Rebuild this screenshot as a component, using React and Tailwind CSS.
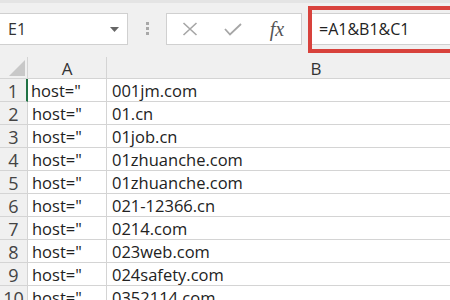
import React from "react";

const rows = [
  "001jm.com",
  "01.cn",
  "01job.cn",
  "01zhuanche.com",
  "01zhuanche.com",
  "021-12366.cn",
  "0214.com",
  "023web.com",
  "024safety.com",
  "0352114.com",
];

export default function App() {
  return (
    <div
      className="w-[450px] h-[300px] overflow-hidden bg-white text-[#222]"
      style={{ fontFamily: '"Open Sans", "Noto Sans CJK SC", sans-serif' }}
    >
      {/* Toolbar */}
      <div className="h-[57px] bg-[#f0f0f0] border-t-[3px] border-[#e4e4e4] flex items-start">
        <div className="mt-[10px] h-[32px] w-[128px] shrink-0 bg-white border border-[#d0d0d0] border-l-0 flex items-center justify-between pl-[8px] pr-[8px]">
          <span className="text-[16px] text-[#333]">E1</span>
          <svg width="9" height="5" viewBox="0 0 9 5">
            <path d="M0 0 H9 L4.5 5 Z" fill="#666" />
          </svg>
        </div>
        <div className="w-[38px] shrink-0 h-[49px] flex flex-col items-center justify-center gap-[2px] pt-[2px]">
          <div className="w-[3px] h-[3px] bg-[#a8a8a8]" />
          <div className="w-[3px] h-[3px] bg-[#a8a8a8]" />
          <div className="w-[3px] h-[3px] bg-[#a8a8a8]" />
        </div>
        <div className="mt-[10px] h-[32px] w-[136px] shrink-0 bg-white border border-[#d0d0d0] flex items-center">
          <div className="w-[44px] flex justify-center pl-[2px]">
            <svg width="16" height="14" viewBox="0 0 16 14">
              <path d="M1.5 1 L14.5 13 M14.5 1 L1.5 13" stroke="#a6a6a6" strokeWidth="1.6" fill="none" />
            </svg>
          </div>
          <div className="w-[44px] flex justify-center">
            <svg width="18" height="13" viewBox="0 0 18 13">
              <path d="M1 6 L6 11.5 L17 1" stroke="#a6a6a6" strokeWidth="1.8" fill="none" />
            </svg>
          </div>
          <div className="w-[44px] flex justify-center">
            <span
              className="text-[20px] italic text-[#555] leading-none"
              style={{ fontFamily: '"Liberation Serif", serif' }}
            >
              fx
            </span>
          </div>
        </div>
        <div className="ml-[6px] mt-[3px] h-[47px] flex-1 border-4 border-r-0 border-[#d8423c] pt-[3px]">
          <div className="h-[32px] bg-white border-y border-[#d0d0d0] flex items-center pl-[7px]">
            <span className="text-[16px] text-[#222]">=A1&amp;B1&amp;C1</span>
          </div>
        </div>
      </div>

      {/* Column headers */}
      <div className="h-[22px] bg-[#f0f0f0] flex border-b border-[#d4d4d4]">
        <div className="w-[28px] shrink-0 border-r border-[#d4d4d4] relative">
          <svg className="absolute right-[2px] bottom-[2px]" width="16" height="16" viewBox="0 0 16 16">
            <path d="M16 0 V16 H0 Z" fill="#c8c8c8" />
          </svg>
        </div>
        <div className="w-[79px] shrink-0 border-r border-[#d4d4d4] flex items-center justify-center pt-[2px] text-[17px] text-[#333]">
          A
        </div>
        <div className="w-[418px] shrink-0 flex items-center justify-center pt-[2px] text-[17px] text-[#333]">
          B
        </div>
      </div>

      {/* Rows */}
      {rows.map((b, i) => (
        <div key={i} className="h-[23px] flex">
          <div
            className={
              i === 0
                ? "w-[28px] shrink-0 bg-[#f0f0f0] border-b border-[#d4d4d4] border-r-2 border-r-[#217346] flex items-center justify-center pt-[2px] text-[18px] text-[#444]"
                : "w-[28px] shrink-0 bg-[#f0f0f0] border-b border-r border-[#d4d4d4] flex items-center justify-center pt-[2px] text-[18px] text-[#444]"
            }
          >
            {i + 1}
          </div>
          <div
            className={
              i === 0
                ? "w-[79px] shrink-0 border-b border-r border-[#d4d4d4] flex items-center pl-[3px] pt-[2px] text-[16.5px]"
                : "w-[79px] shrink-0 border-b border-r border-[#d4d4d4] flex items-center pl-[4px] pt-[2px] text-[16.5px]"
            }
          >
            host="
          </div>
          <div className="flex-1 border-b border-[#d4d4d4] flex items-center pl-[5px] pt-[2px] text-[16.5px] whitespace-nowrap">
            {b}
          </div>
        </div>
      ))}
    </div>
  );
}
